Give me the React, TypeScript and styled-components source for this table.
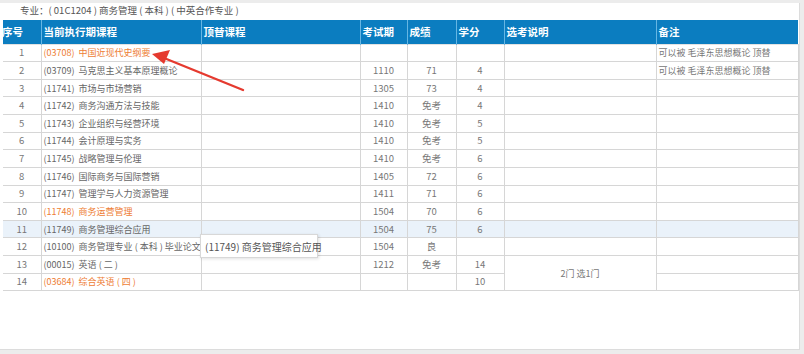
import styled, { createGlobalStyle } from "styled-components";

const GlobalStyle = createGlobalStyle`
  html, body {
    margin: 0;
    padding: 0;
    background: #ececec;
  }
  body {
    font-family: "Noto Sans CJK SC", "Liberation Sans", sans-serif;
  }
`;

const Page = styled.div`
  position: relative;
  width: 804px;
  height: 354px;
  overflow: hidden;
  background: #ececec;
`;

const Panel = styled.div`
  margin-top: 3px;
  width: 800px;
  height: 347px;
  padding-left: 3px;
  box-sizing: border-box;
  background: #ffffff;
  border-right: 1px solid #dcdcdc;
  border-bottom: 1px solid #dcdcdc;
`;

const Title = styled.div`
  height: 17px;
  padding-left: 17px;
  font-size: 9.5px;
  line-height: 14px;
  color: #555;
`;

const Table = styled.table`
  width: 795px;
  border-collapse: collapse;
  table-layout: fixed;
  font-size: 9.5px;
  color: #777;
`;

const HeadRow = styled.tr`
  height: 24px;
  background: #0b7dc0;
`;

const HeadCell = styled.th`
  padding: 0 2px;
  text-align: left;
  font-size: 10.5px;
  font-weight: 700;
  color: #ffffff;
  border-left: 1px solid #66b6e3;
  white-space: nowrap;
  overflow: hidden;
  &:first-child {
    border-left: none;
    text-indent: -3px;
  }
`;

const Row = styled.tr<{ $active?: boolean }>`
  height: 17.64px;
  background: ${(p) => (p.$active ? "#eaf2fa" : "#ffffff")};
`;

const Cell = styled.td<{ $align?: "left" | "center" }>`
  padding: 0 2px;
  text-align: ${(p) => p.$align || "left"};
  border: 1px solid #d6d6d6;
  border-top-color: #e2e2e2;
  white-space: nowrap;
  overflow: hidden;
  line-height: 15px;
  &:first-child {
    border-left: none;
  }
`;

const Course = styled.span<{ $orange?: boolean }>`
  font-size: 9px;
  color: ${(p) => (p.$orange ? "#ee7d33" : "#666")};
`;

const Note = styled.span`
  font-size: 9px;
  color: #777;
`;

const Tooltip = styled.div`
  position: absolute;
  left: 200px;
  top: 234px;
  width: 118px;
  height: 24px;
  box-sizing: border-box;
  padding-left: 4px;
  font-size: 10px;
  line-height: 23px;
  color: #555;
  background: #ffffff;
  border: 1px solid #d8d8d8;
  box-shadow: 1px 1px 3px rgba(0, 0, 0, 0.12);
  white-space: nowrap;
`;

const Arrow = styled.svg`
  position: absolute;
  left: 0;
  top: 0;
  pointer-events: none;
`;

type Course = {
  no: number;
  code: string;
  name: string;
  orange?: boolean;
  period?: string;
  score?: string;
  credit?: string;
  note?: string;
};

const courses: Course[] = [
  { no: 1, code: "03708", name: "中国近现代史纲要", orange: true, note: "可以被 毛泽东思想概论 顶替" },
  { no: 2, code: "03709", name: "马克思主义基本原理概论", period: "1110", score: "71", credit: "4", note: "可以被 毛泽东思想概论 顶替" },
  { no: 3, code: "11741", name: "市场与市场营销", period: "1305", score: "73", credit: "4" },
  { no: 4, code: "11742", name: "商务沟通方法与技能", period: "1410", score: "免考", credit: "4" },
  { no: 5, code: "11743", name: "企业组织与经营环境", period: "1410", score: "免考", credit: "5" },
  { no: 6, code: "11744", name: "会计原理与实务", period: "1410", score: "免考", credit: "5" },
  { no: 7, code: "11745", name: "战略管理与伦理", period: "1410", score: "免考", credit: "6" },
  { no: 8, code: "11746", name: "国际商务与国际营销", period: "1405", score: "72", credit: "6" },
  { no: 9, code: "11747", name: "管理学与人力资源管理", period: "1411", score: "71", credit: "6" },
  { no: 10, code: "11748", name: "商务运营管理", orange: true, period: "1504", score: "70", credit: "6" },
  { no: 11, code: "11749", name: "商务管理综合应用", period: "1504", score: "75", credit: "6" },
  { no: 12, code: "10100", name: "商务管理专业 ( 本科 ) 毕业论文", period: "1504", score: "良" },
  { no: 13, code: "00015", name: "英语 ( 二 )", period: "1212", score: "免考", credit: "14" },
  { no: 14, code: "03684", name: "综合英语 ( 四 )", orange: true, credit: "10" },
];

const widths = [38, 160, 159, 47, 49, 48, 152, 142];

export default function App() {
  return (
    <Page>
      <GlobalStyle />
      <Panel>
        <Title>专业：( 01C1204 ) 商务管理 ( 本科 ) ( 中英合作专业 )</Title>
        <Table>
          <colgroup>
            {widths.map((w, i) => (
              <col key={i} style={{ width: w }} />
            ))}
          </colgroup>
          <thead>
            <HeadRow>
              <HeadCell>序号</HeadCell>
              <HeadCell>当前执行期课程</HeadCell>
              <HeadCell>顶替课程</HeadCell>
              <HeadCell>考试期</HeadCell>
              <HeadCell>成绩</HeadCell>
              <HeadCell>学分</HeadCell>
              <HeadCell>选考说明</HeadCell>
              <HeadCell>备注</HeadCell>
            </HeadRow>
          </thead>
          <tbody>
            {courses.map((c) => (
              <Row key={c.no} $active={c.no === 11}>
                <Cell $align="center">{c.no}</Cell>
                <Cell>
                  <Course $orange={c.orange}>
                    ({c.code})&nbsp;&nbsp;{c.name}
                  </Course>
                </Cell>
                <Cell />
                <Cell $align="center">{c.period}</Cell>
                <Cell $align="center">{c.score}</Cell>
                <Cell $align="center">{c.credit}</Cell>
                {c.no === 13 ? (
                  <Cell $align="center" rowSpan={2}>
                    <Note>2门 选1门</Note>
                  </Cell>
                ) : c.no === 14 ? null : (
                  <Cell />
                )}
                <Cell>
                  <Note>{c.note}</Note>
                </Cell>
              </Row>
            ))}
          </tbody>
        </Table>
      </Panel>
      <Tooltip>(11749) 商务管理综合应用</Tooltip>
      <Arrow width="804" height="354" viewBox="0 0 804 354">
        <line x1="243" y1="90" x2="164" y2="58" stroke="#e53a2f" strokeWidth="2.4" strokeLinecap="round" />
        <polygon points="152,54 170,50 164,64" fill="#e53a2f" />
      </Arrow>
    </Page>
  );
}
